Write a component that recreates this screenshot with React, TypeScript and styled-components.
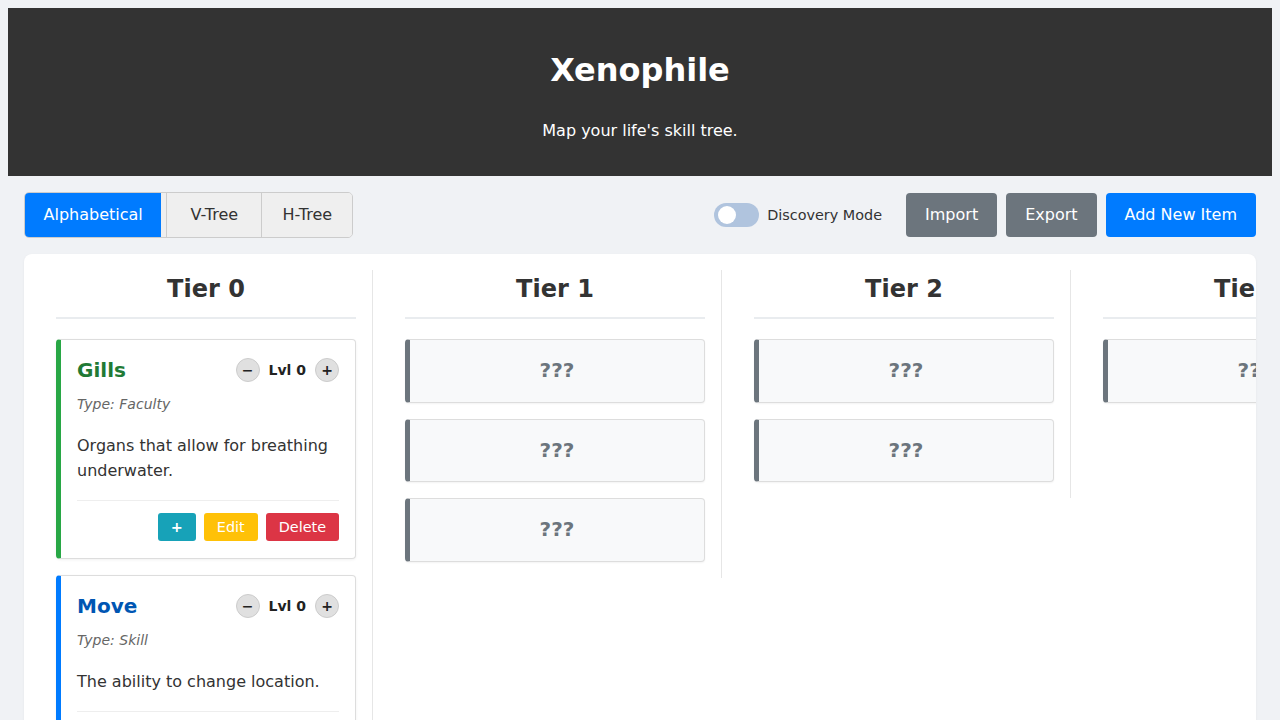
import React from "react";
import styled, { createGlobalStyle } from "styled-components";

const Global = createGlobalStyle`
  html, body { margin: 0; padding: 0; }
  body {
    margin: 8px;
    background: #f0f2f5;
    font-family: "DejaVu Sans", "Liberation Sans", sans-serif;
    color: #333;
  }
  * { box-sizing: border-box; }
`;

const Header = styled.header`
  background: #333;
  color: #fff;
  text-align: center;
  padding: 40px 20px 33px;
  height: 168px;
`;

const Title = styled.h1`
  margin: 0;
  font-size: 32px;
  line-height: 44px;
  font-weight: bold;
`;

const Subtitle = styled.p`
  margin: 27px 0 0;
  font-size: 16px;
  line-height: 24px;
`;

const Main = styled.main`
  padding: 16px;
`;

const Toolbar = styled.div`
  display: flex;
  justify-content: space-between;
  align-items: center;
  height: 46px;
  margin-bottom: 16px;
`;

const ViewGroup = styled.div`
  display: flex;
  border: 1px solid #ccc;
  border-radius: 5px;
  overflow: hidden;
  background: #efefef;
`;

const ViewButton = styled.button<{ $active?: boolean; $minW?: number; $gap?: number }>`
  font-family: inherit;
  font-size: 16px;
  line-height: 24px;
  padding: 10px 18.5px;
  border: none;
  border-left: ${(p) => (p.$active ? "none" : "1px solid #ccc")};
  margin-left: ${(p) => p.$gap ?? 0}px;
  min-width: ${(p) => p.$minW ?? 0}px;
  background: ${(p) => (p.$active ? "#007bff" : "#efefef")};
  color: ${(p) => (p.$active ? "#fff" : "#333")};
  cursor: pointer;
`;

const Actions = styled.div`
  display: flex;
  align-items: center;
  gap: 9px;
`;

const ToggleWrap = styled.label`
  display: flex;
  align-items: center;
  gap: 8px;
  font-size: 14.4px;
  color: #333;
  margin-right: 15px;
`;

const Track = styled.span`
  position: relative;
  width: 45px;
  height: 24px;
  border-radius: 12px;
  background: #b0c4de;
  display: inline-block;
`;

const Knob = styled.span`
  position: absolute;
  left: 4px;
  top: 3px;
  width: 18px;
  height: 18px;
  border-radius: 50%;
  background: #fff;
`;

const ActionButton = styled.button<{ $color: string }>`
  font-family: inherit;
  font-size: 16px;
  line-height: 24px;
  padding: 10px 19px;
  border: none;
  border-radius: 4px;
  background: ${(p) => p.$color};
  color: #fff;
  height: 44px;
  cursor: pointer;
`;

const Board = styled.section`
  background: #fff;
  border-radius: 8px;
  padding: 16px;
  display: flex;
  align-items: flex-start;
  gap: 16px;
  overflow: hidden;
  min-height: 520px;
  box-shadow: 0 1px 3px rgba(0, 0, 0, 0.05);
`;

const Column = styled.div`
  flex: 0 0 333px;
  padding: 0 16px 16px;
  border-right: 1px solid #e6e6e6;
  display: flex;
  flex-direction: column;
  gap: 16px;
`;

const ColumnTitle = styled.h2`
  margin: 0 0 4px;
  font-size: 24px;
  line-height: 37px;
  font-weight: bold;
  text-align: center;
  color: #333;
  padding-top: 1px;
  padding-bottom: 9px;
  border-bottom: 2px solid #e9ecef;
`;

const Card = styled.div<{ $accent: string }>`
  background: #fff;
  border: 1px solid #ddd;
  border-left: 5px solid ${(p) => p.$accent};
  border-radius: 4px;
  padding: 16px 16px 17px 16px;
  box-shadow: 0 1px 3px rgba(0, 0, 0, 0.06);
`;

const CardHead = styled.div`
  display: flex;
  justify-content: space-between;
  align-items: center;
  height: 28px;
`;

const CardName = styled.h3<{ $color: string }>`
  margin: 0;
  font-size: 20px;
  font-weight: bold;
  color: ${(p) => p.$color};
`;

const Level = styled.div`
  display: flex;
  align-items: center;
  gap: 9px;
  font-size: 14px;
  font-weight: bold;
  color: #222;
`;

const LvlButton = styled.button`
  width: 24px;
  height: 24px;
  border-radius: 50%;
  border: 1px solid #ccc;
  background: #e0e0e0;
  color: #222;
  font-family: inherit;
  font-size: 14px;
  font-weight: bold;
  padding: 0;
  line-height: 22px;
  text-align: center;
`;

const CardType = styled.div`
  margin-top: 10px;
  font-size: 14px;
  line-height: 20px;
  font-style: italic;
  color: #666;
`;

const CardDesc = styled.p`
  margin: 19px 0 0;
  font-size: 16px;
  line-height: 25px;
  color: #333;
`;

const CardFooter = styled.div`
  margin-top: 17px;
  border-top: 1px solid #eee;
  padding-top: 12px;
  display: flex;
  justify-content: flex-end;
  gap: 8px;
`;

const SmallButton = styled.button<{ $color: string; $bold?: boolean }>`
  font-family: inherit;
  font-size: 14.4px;
  line-height: 18px;
  font-weight: ${(p) => (p.$bold ? "bold" : "normal")};
  padding: 5px 13px;
  border: none;
  border-radius: 3px;
  background: ${(p) => p.$color};
  color: #fff;
`;

const Locked = styled.div`
  background: #f8f9fa;
  border: 1px solid #ddd;
  border-left: 5px solid #6c757d;
  border-radius: 4px;
  padding: 20px;
  text-align: center;
  font-size: 20px;
  line-height: 21.5px;
  font-weight: bold;
  color: #6c757d;
  box-shadow: 0 1px 2px rgba(0, 0, 0, 0.05);
`;

type Item = { name: string; type: string; desc: string; accent: string; color: string };

const tier0: Item[] = [
  {
    name: "Gills",
    type: "Faculty",
    desc: "Organs that allow for breathing underwater.",
    accent: "#28a745",
    color: "#217a35",
  },
  {
    name: "Move",
    type: "Skill",
    desc: "The ability to change location.",
    accent: "#007bff",
    color: "#0056b3",
  },
];

const lockedCounts = [3, 2, 1];

function SkillCard({ item }: { item: Item }) {
  return (
    <Card $accent={item.accent}>
      <CardHead>
        <CardName $color={item.color}>{item.name}</CardName>
        <Level>
          <LvlButton>−</LvlButton>
          <span>Lvl 0</span>
          <LvlButton>+</LvlButton>
        </Level>
      </CardHead>
      <CardType>Type: {item.type}</CardType>
      <CardDesc>{item.desc}</CardDesc>
      <CardFooter>
        <SmallButton $color="#17a2b8" $bold>+</SmallButton>
        <SmallButton $color="#ffc107">Edit</SmallButton>
        <SmallButton $color="#dc3545">Delete</SmallButton>
      </CardFooter>
    </Card>
  );
}

export default function App() {
  return (
    <>
      <Global />
      <Header>
        <Title>Xenophile</Title>
        <Subtitle>Map your life's skill tree.</Subtitle>
      </Header>
      <Main>
        <Toolbar>
          <ViewGroup>
            <ViewButton $active>Alphabetical</ViewButton>
            <ViewButton $gap={5} $minW={95}>V-Tree</ViewButton>
            <ViewButton $minW={91}>H-Tree</ViewButton>
          </ViewGroup>
          <Actions>
            <ToggleWrap>
              <Track>
                <Knob />
              </Track>
              Discovery Mode
            </ToggleWrap>
            <ActionButton $color="#6c757d">Import</ActionButton>
            <ActionButton $color="#6c757d">Export</ActionButton>
            <ActionButton $color="#007bff">Add New Item</ActionButton>
          </Actions>
        </Toolbar>
        <Board>
          <Column>
            <ColumnTitle>Tier 0</ColumnTitle>
            {tier0.map((it) => (
              <SkillCard key={it.name} item={it} />
            ))}
          </Column>
          {lockedCounts.map((n, i) => (
            <Column key={i}>
              <ColumnTitle>Tier {i + 1}</ColumnTitle>
              {Array.from({ length: n }).map((_, j) => (
                <Locked key={j}>???</Locked>
              ))}
            </Column>
          ))}
        </Board>
      </Main>
    </>
  );
}
